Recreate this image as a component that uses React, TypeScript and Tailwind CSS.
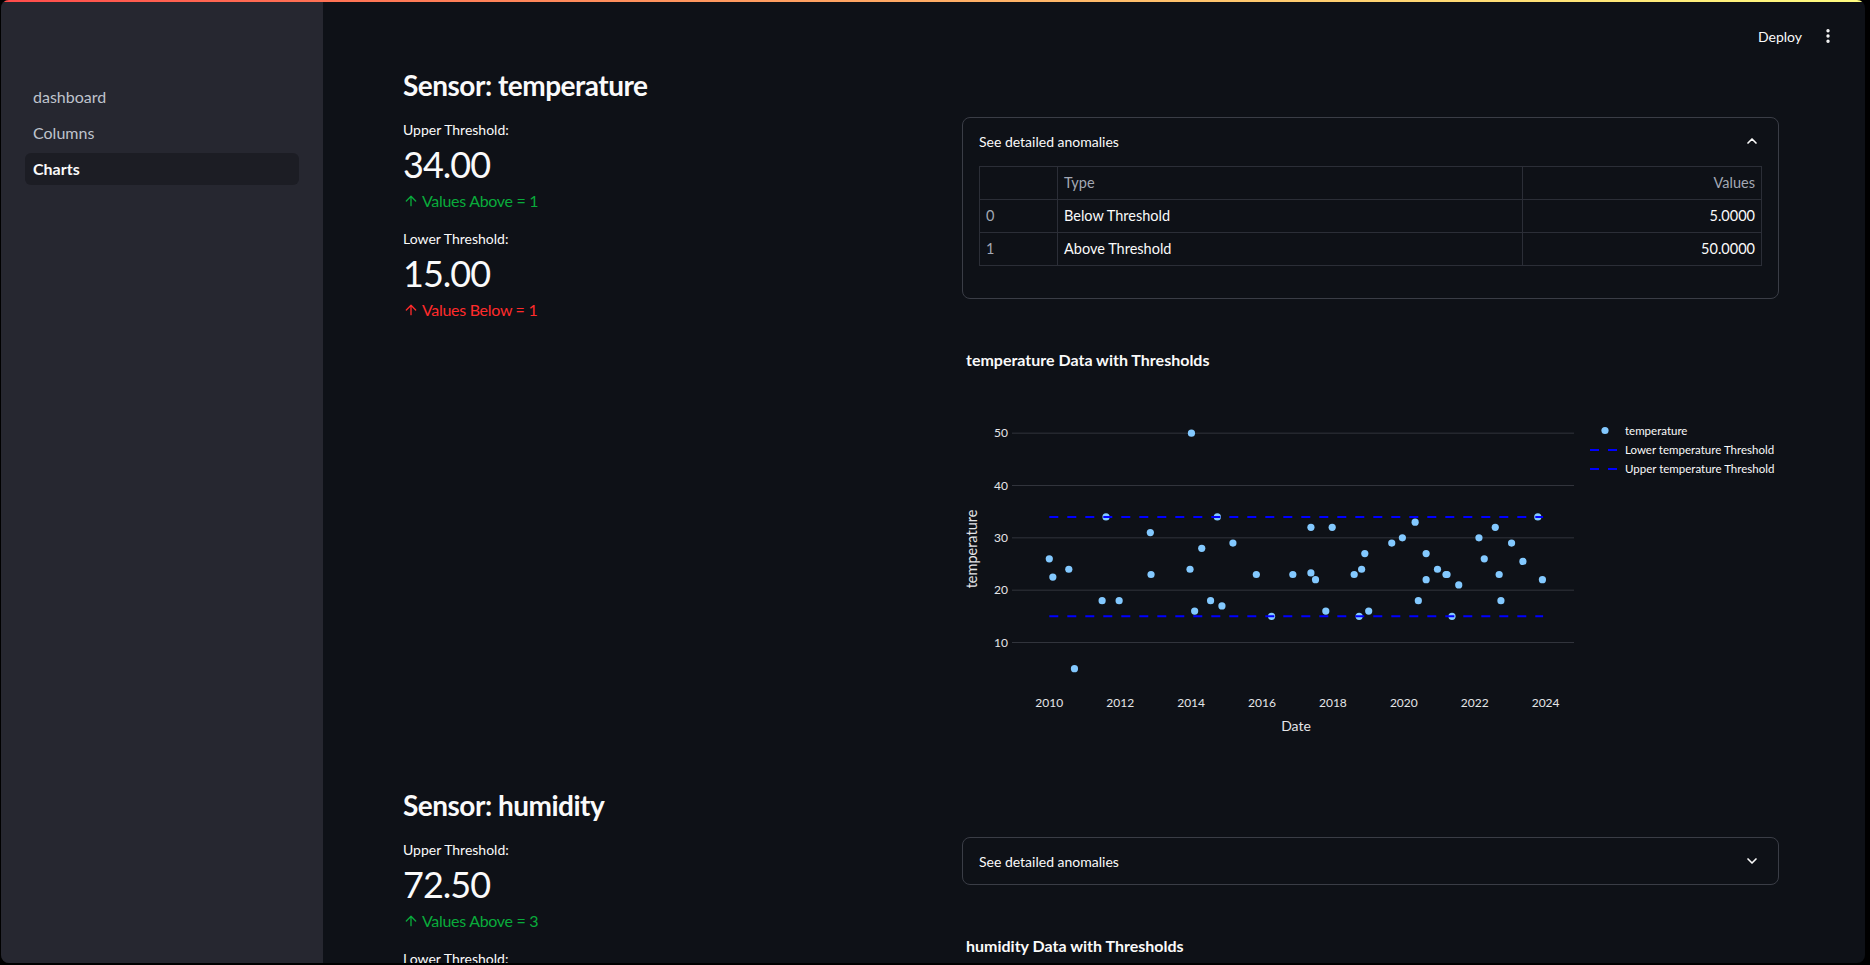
import React from "react";
import { ArrowUp, ChevronDown, ChevronUp, EllipsisVertical } from "lucide-react";

// --- TYPES ---
type Point = [number, number]; // [year (decimal), value]

type Sensor = {
  name: string;
  upper: string;
  lower: string;
  above: number;
  below: number;
  expanded: boolean;
  anomalies: { type: string; value: string }[];
  points: Point[];
  upperLine: number;
  lowerLine: number;
  yMin: number;
  yMax: number;
  yTicks: number[];
};

// --- MOCK DATA ---
const TEMP_POINTS: Point[] = [
  [2010.0, 26], [2010.1, 22.5], [2010.55, 24], [2010.71, 5], [2011.49, 18],
  [2011.6, 34], [2011.97, 18], [2012.85, 31], [2012.87, 23], [2013.97, 24],
  [2014.01, 50], [2014.1, 16], [2014.3, 28], [2014.55, 18], [2014.74, 34],
  [2014.87, 17], [2015.18, 29], [2015.84, 23], [2016.27, 15], [2016.87, 23],
  [2017.38, 32], [2017.38, 23.3], [2017.51, 22], [2017.8, 16], [2017.98, 32],
  [2018.6, 23], [2018.74, 15], [2018.81, 24], [2018.9, 27], [2019.01, 16],
  [2019.66, 29], [2019.96, 30], [2020.32, 33], [2020.41, 18], [2020.63, 27],
  [2020.63, 22], [2020.95, 24], [2021.19, 23], [2021.22, 23], [2021.36, 15],
  [2021.55, 21], [2022.12, 30], [2022.27, 26], [2022.58, 32], [2022.69, 23],
  [2022.74, 18], [2023.04, 29], [2023.36, 25.5], [2023.78, 34], [2023.91, 22],
];

const HUMIDITY_POINTS: Point[] = [
  [2010.2, 55], [2011.1, 62], [2012.4, 48], [2013.3, 75], [2014.6, 58],
  [2015.5, 66], [2016.8, 30], [2018.1, 80], [2019.4, 52], [2020.7, 71],
  [2021.9, 90], [2023.2, 61],
];

const SENSORS: Sensor[] = [
  {
    name: "temperature",
    upper: "34.00",
    lower: "15.00",
    above: 1,
    below: 1,
    expanded: true,
    anomalies: [
      { type: "Below Threshold", value: "5.0000" },
      { type: "Above Threshold", value: "50.0000" },
    ],
    points: TEMP_POINTS,
    upperLine: 34,
    lowerLine: 15,
    yMin: 1.5,
    yMax: 55,
    yTicks: [10, 20, 30, 40, 50],
  },
  {
    name: "humidity",
    upper: "72.50",
    lower: "35.00",
    above: 3,
    below: 1,
    expanded: false,
    anomalies: [],
    points: HUMIDITY_POINTS,
    upperLine: 72.5,
    lowerLine: 35,
    yMin: 25,
    yMax: 95,
    yTicks: [30, 40, 50, 60, 70, 80, 90],
  },
];

const NAV = ["dashboard", "Columns", "Charts"];

// --- CHART GEOMETRY (plot area inside 817x450 figure) ---
const PLOT_L = 50;
const PLOT_R = 612;
const PLOT_T = 92;
const PLOT_B = 372;
const X_MIN = 2008.948;
const X_MAX = 2024.801;

// --- COMPONENTS ---

function Metric({ label, value, delta, positive }: { label: string; value: string; delta: string; positive: boolean }) {
  return (
    <div className="flex flex-col">
      <div className="h-[24px] flex items-center text-[14px] text-[#fafafa]">{label}</div>
      <div className="h-[46px] flex items-center text-[36px] leading-none text-[#fafafa] tracking-[-1px]">{value}</div>
      <div className={`mt-[2px] h-[24px] flex items-center gap-[3px] text-[16px] tracking-[-0.3px] ${positive ? "text-[#09ab3b]" : "text-[#ff2b2b]"}`}>
        <ArrowUp size={16} strokeWidth={2} />
        <span>{delta}</span>
      </div>
    </div>
  );
}

function Expander({ sensor }: { sensor: Sensor }) {
  return (
    <div className="border border-[#3a3d46] rounded-lg">
      <div className="h-[46px] flex items-center justify-between pl-[16px] pr-[18px] text-[14px] text-[#fafafa]">
        <span>See detailed anomalies</span>
        {sensor.expanded ? <ChevronUp size={16} strokeWidth={2.5} /> : <ChevronDown size={16} strokeWidth={2.5} />}
      </div>
      {sensor.expanded && (
        <div className="px-[16px] pt-[2px] pb-[32px]">
          <table className="w-full border-collapse text-[14.5px]">
            <thead>
              <tr className="h-[33px]">
                <th className="w-[78px] border border-[#2b2e37]"></th>
                <th className="w-[465px] border border-[#2b2e37] text-left font-normal px-[6px] text-[#a3a8b4]">Type</th>
                <th className="border border-[#2b2e37] text-right font-normal px-[6px] text-[#a3a8b4]">Values</th>
              </tr>
            </thead>
            <tbody>
              {sensor.anomalies.map((a, i) => (
                <tr key={i} className="h-[33px]">
                  <td className="border border-[#2b2e37] px-[6px] text-[#a3a8b4]">{i}</td>
                  <td className="border border-[#2b2e37] px-[6px] text-[#fafafa]">{a.type}</td>
                  <td className="border border-[#2b2e37] px-[6px] text-right text-[#fafafa]">{a.value}</td>
                </tr>
              ))}
            </tbody>
          </table>
        </div>
      )}
    </div>
  );
}

function ThresholdChart({ sensor }: { sensor: Sensor }) {
  const xs = (year: number) => PLOT_L + ((year - X_MIN) / (X_MAX - X_MIN)) * (PLOT_R - PLOT_L);
  const ys = (v: number) => PLOT_T + ((sensor.yMax - v) / (sensor.yMax - sensor.yMin)) * (PLOT_B - PLOT_T);
  const xTicks = [2010, 2012, 2014, 2016, 2018, 2020, 2022, 2024];
  const x1 = xs(2010);
  const x2 = xs(2023.93);
  const midY = (PLOT_T + PLOT_B) / 2 + 2;

  return (
    <svg width={817} height={450} viewBox="0 0 817 450" className="block">
      <text x={4} y={51} fill="#fafafa" fontSize={16} fontWeight={700}>
        {sensor.name} Data with Thresholds
      </text>

      {/* grid + y ticks */}
      {sensor.yTicks.map((t) => (
        <g key={t}>
          <line x1={PLOT_L} x2={PLOT_R} y1={ys(t)} y2={ys(t)} stroke="#31343c" strokeWidth={1} />
          <text x={46} y={ys(t) + 4} fill="#e4e5e8" fontSize={12} textAnchor="end">{t}</text>
        </g>
      ))}

      {/* x ticks */}
      {xTicks.map((t) => (
        <text key={t} x={xs(t)} y={392} fill="#e4e5e8" fontSize={12} textAnchor="middle">{t}</text>
      ))}
      <text x={334} y={416} fill="#e4e5e8" fontSize={14} textAnchor="middle">Date</text>
      <text x={15} y={midY} fill="#e4e5e8" fontSize={14.5} textAnchor="middle" transform={`rotate(-90 15 ${midY})`}>
        {sensor.name}
      </text>

      {/* markers */}
      {sensor.points.map(([yr, v], i) => (
        <circle key={i} cx={xs(yr)} cy={ys(v)} r={3.6} fill="#83c9ff" />
      ))}

      {/* threshold lines */}
      <line x1={x1} x2={x2} y1={ys(sensor.lowerLine)} y2={ys(sensor.lowerLine)} stroke="#0000ff" strokeWidth={2} strokeDasharray="9 9" />
      <line x1={x1} x2={x2} y1={ys(sensor.upperLine)} y2={ys(sensor.upperLine)} stroke="#0000ff" strokeWidth={2} strokeDasharray="9 9" />

      {/* legend */}
      <circle cx={643} cy={115.5} r={3.6} fill="#83c9ff" />
      <text x={663} y={119.5} fill="#fafafa" fontSize={11.5}>{sensor.name}</text>
      <line x1={628} x2={656} y1={135} y2={135} stroke="#0000ff" strokeWidth={2} strokeDasharray="9 9" />
      <text x={663} y={139} fill="#fafafa" fontSize={11.5}>Lower {sensor.name} Threshold</text>
      <line x1={628} x2={656} y1={154} y2={154} stroke="#0000ff" strokeWidth={2} strokeDasharray="9 9" />
      <text x={663} y={158} fill="#fafafa" fontSize={11.5}>Upper {sensor.name} Threshold</text>
    </svg>
  );
}

function SensorSection({ sensor }: { sensor: Sensor }) {
  return (
    <section className="flex flex-col">
      <h2 className="h-[34px] flex items-center text-[28px] font-bold text-[#fafafa] tracking-[-0.5px]">
        Sensor: {sensor.name}
      </h2>
      <div className="mt-[15px] flex gap-[16px]">
        {/* metrics */}
        <div className="w-[544px] flex flex-col gap-[13px]">
          <Metric label="Upper Threshold:" value={sensor.upper} delta={`Values Above = ${sensor.above}`} positive />
          <Metric label="Lower Threshold:" value={sensor.lower} delta={`Values Below = ${sensor.below}`} positive={false} />
        </div>
        {/* anomalies + chart */}
        <div className="w-[817px] flex flex-col gap-[16px]">
          <Expander sensor={sensor} />
          <ThresholdChart sensor={sensor} />
        </div>
      </div>
    </section>
  );
}

export default function App() {
  return (
    <div className="w-[1870px] h-[965px] bg-black pl-[1px] pr-[5px] pb-[2px] font-['Lato',sans-serif]">
      <div className="h-full rounded-lg overflow-hidden flex flex-col bg-[#0e1117]">
        {/* top decoration */}
        <div className="h-[2px] shrink-0 bg-gradient-to-r from-[#ff4b4b] to-[#fffd80]" />

        <div className="flex-1 flex min-h-0">
          {/* SIDEBAR */}
          <aside className="w-[322px] shrink-0 bg-[#262730] px-[24px] pt-[79px]">
            <nav className="flex flex-col gap-[4px]">
              {NAV.map((item) => (
                <div
                  key={item}
                  className={`h-[32px] flex items-center pl-[8px] rounded-md text-[16px] ${
                    item === "Charts" ? "bg-[#1c1d24] text-[#fafafa] font-bold" : "text-[#bfc3cc]"
                  }`}
                >
                  {item}
                </div>
              ))}
            </nav>
          </aside>

          {/* MAIN */}
          <main className="flex-1 flex flex-col overflow-hidden">
            <header className="h-[66px] shrink-0 flex items-center justify-end gap-[17px] pr-[28px] pt-[2px] text-[14px] text-[#fafafa]">
              <span>Deploy</span>
              <EllipsisVertical size={18} strokeWidth={2.5} />
            </header>
            <div className="pl-[80px] pr-[86px] flex flex-col gap-[23px]">
              {SENSORS.map((s) => (
                <SensorSection key={s.name} sensor={s} />
              ))}
            </div>
          </main>
        </div>
      </div>
    </div>
  );
}
